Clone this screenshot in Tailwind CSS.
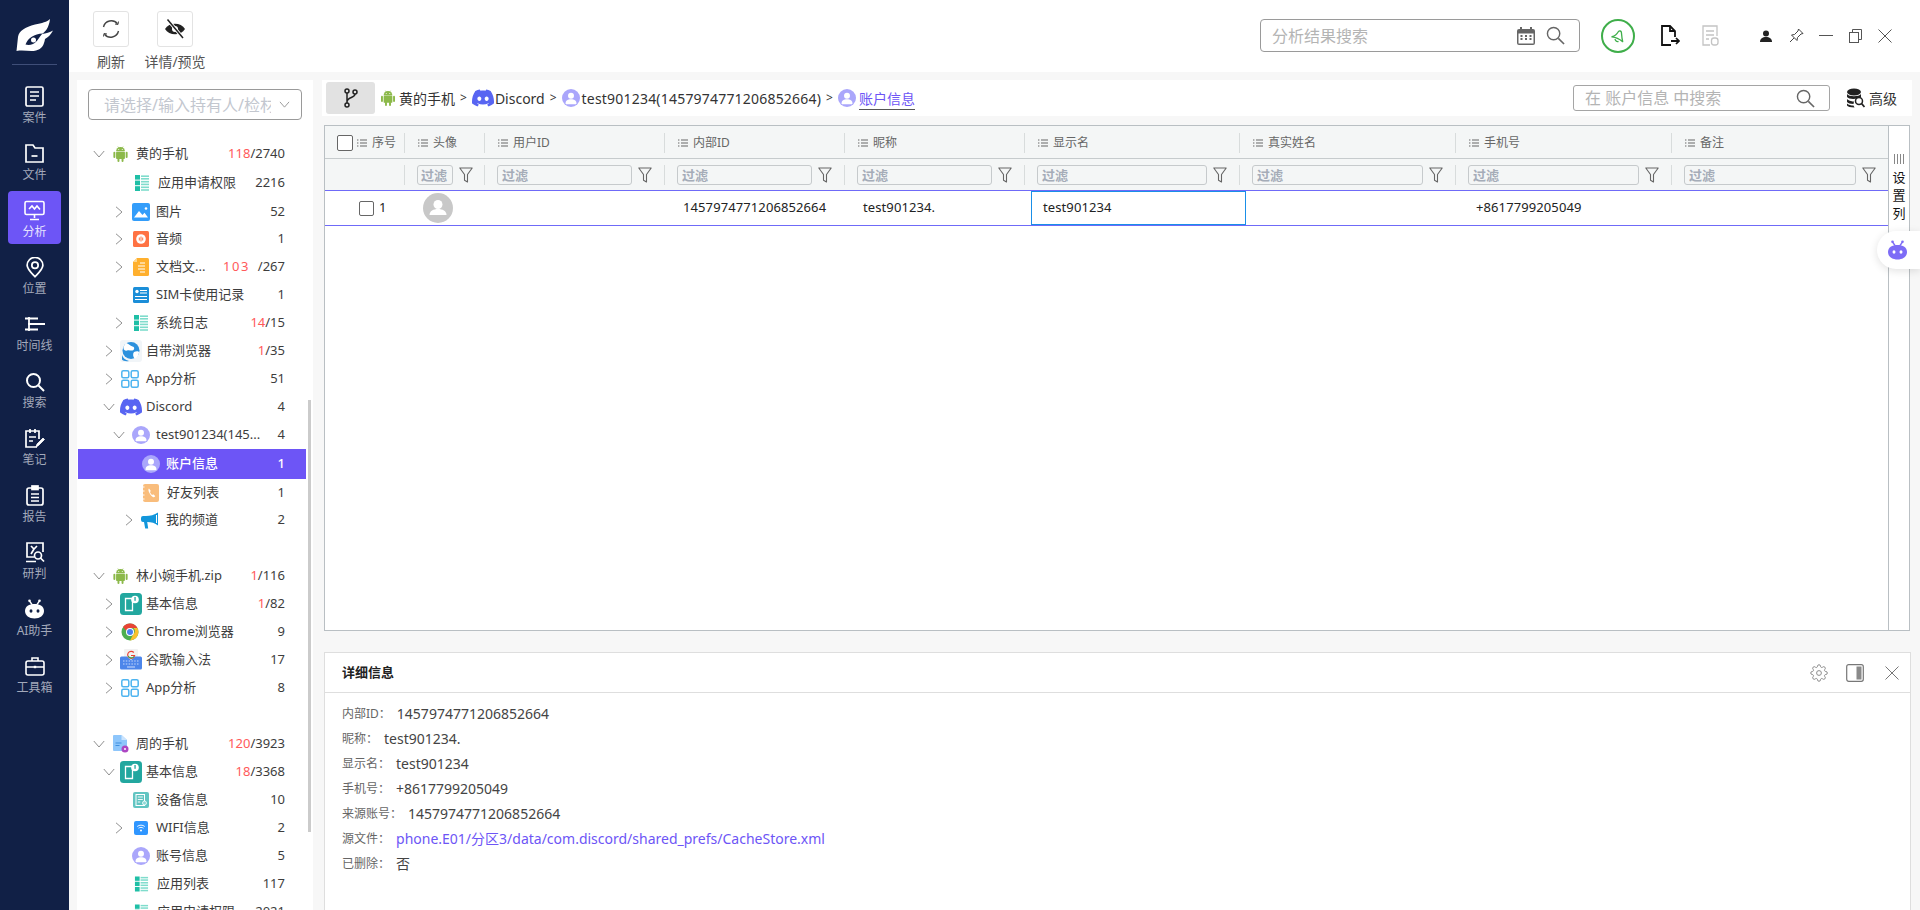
<!DOCTYPE html>
<html lang="zh-CN">
<head>
<meta charset="UTF-8" />
<title>分析</title>
<script src="https://cdn.jsdelivr.net/npm/@tailwindcss/browser@4"></script>
</head>
<body class="font-['Noto_Sans','Noto_Sans_CJK_SC',sans-serif] bg-white overflow-hidden">
<svg class="hidden">
  <symbol id="android" viewBox="0 0 16 18"><g fill="#8cb94a"><rect x="0" y="6.5" width="2.2" height="7" rx="1.1"/><rect x="13.8" y="6.5" width="2.2" height="7" rx="1.1"/><rect x="3" y="6.5" width="10" height="8" rx="1"/><rect x="4.6" y="13" width="2.2" height="5" rx="1.1"/><rect x="9.2" y="13" width="2.2" height="5" rx="1.1"/><path d="M3 6a5 5 0 0 1 10 0z"/></g><path d="M5 .6l1.2 2M11 .6 9.8 2.6" stroke="#8cb94a" stroke-width=".7"/><circle cx="6" cy="3.9" r=".6" fill="#fff"/><circle cx="10" cy="3.9" r=".6" fill="#fff"/></symbol>
  <symbol id="applist" viewBox="0 0 16 16"><g fill="#1fbfa6"><rect x="1" y="0" width="5" height="4.6"/><rect x="1" y="5.6" width="5" height="4.6"/><rect x="1" y="11.2" width="5" height="4.8"/></g><g fill="#7fdccc"><rect x="7" y="0.4" width="8" height="1.6"/><rect x="7" y="3" width="8" height="1.6"/><rect x="7" y="5.9" width="8" height="1.6"/><rect x="7" y="8.6" width="8" height="1.6"/><rect x="7" y="11.5" width="8" height="1.6"/><rect x="7" y="14.2" width="8" height="1.6"/></g></symbol>
  <symbol id="picture" viewBox="0 0 18 18"><rect width="18" height="18" rx="2" fill="#339dfa"/><path d="M2 14.5 7 8l3.5 4 2-2.2 3.5 4.700z" fill="#fff"/><circle cx="14" cy="5.500" r="1.300" fill="#fff"/></symbol>
  <symbol id="audio" viewBox="0 0 16 16"><rect width="16" height="16" rx="1.500" fill="#ff7243"/><circle cx="8" cy="8" r="4.800" fill="#fff"/><path d="M6.300 6.500v3M8 5.500v5M9.700 6.500v3" stroke="#ff7243" stroke-width="1"/></symbol>
  <symbol id="doc" viewBox="0 0 16 18"><path d="M4 0h10.500A1.500 1.500 0 0 1 16 1.500v15a1.500 1.500 0 0 1-1.500 1.500h-13A1.500 1.500 0 0 1 0 16.500V4z" fill="#ffb02e"/><path d="M0 4h4V0z" fill="#ffd88f"/><path d="M5 8h7M5 11h7M7 14h5M7 5h5" stroke="#fff" stroke-width="1.100"/></symbol>
  <symbol id="sim" viewBox="0 0 16 16"><rect width="16" height="16" rx="1.500" fill="#1b8ed8"/><circle cx="4" cy="4.500" r="1.700" fill="#fff"/><path d="M7 3.500h7M7 6h7M2 9.500h12M2 12.500h12" stroke="#fff" stroke-width="1.100"/></symbol>
  <symbol id="browser" viewBox="0 0 22 22"><rect width="22" height="22" rx="3" fill="#f1f5f8"/><circle cx="11" cy="10.500" r="8.500" fill="#2a90dd"/><path d="M6 3c3 .5 4 3 6.500 3.500s2 3.500 0 4-3-1-5.500 0S3 9 3.500 6.500zM14 12c2-1 4.500-1 5 0 0 3-2 6-4.500 6.500-1.500-2-2-4.500-.5-6.500z" fill="#fff"/><path d="M2 15c1 3 3 5 7 6-3 .5-6 0-7-1.500z" fill="#2a90dd"/></symbol>
  <symbol id="appgrid" viewBox="0 0 18 18"><g fill="none" stroke="#4db4f0" stroke-width="1.500"><rect x=".8" y=".8" width="7" height="7" rx="1.500"/><rect x="10.200" y=".8" width="7" height="7" rx="1.500"/><rect x=".8" y="10.200" width="7" height="7" rx="1.500"/><rect x="10.200" y="10.200" width="7" height="7" rx="1.500"/></g></symbol>
  <symbol id="discord" viewBox="0 0 24 24"><path fill="#5865f2" d="M20.317 4.3698a19.7913 19.7913 0 00-4.8851-1.5152.0741.0741 0 00-.0785.0371c-.211.3753-.4447.8648-.6083 1.2495-1.8447-.2762-3.68-.2762-5.4868 0-.1636-.3933-.4058-.8742-.6177-1.2495a.077.077 0 00-.0785-.037 19.7363 19.7363 0 00-4.8852 1.515.0699.0699 0 00-.0321.0277C.5334 9.0458-.319 13.5799.0992 18.0578a.0824.0824 0 00.0312.0561c2.0528 1.5076 4.0413 2.4228 5.9929 3.0294a.0777.0777 0 00.0842-.0276c.4616-.6304.8731-1.2952 1.226-1.9942a.076.076 0 00-.0416-.1057c-.6528-.2476-1.2743-.5495-1.8722-.8923a.077.077 0 01-.0076-.1277c.1258-.0943.2517-.1923.3718-.2914a.0743.0743 0 01.0776-.0105c3.9278 1.7933 8.18 1.7933 12.0614 0a.0739.0739 0 01.0785.0095c.1202.099.246.1981.3728.2924a.077.077 0 01-.0066.1276 12.2986 12.2986 0 01-1.873.8914.0766.0766 0 00-.0407.1067c.3604.698.7719 1.3628 1.225 1.9932a.076.076 0 00.0842.0286c1.961-.6067 3.9495-1.5219 6.0023-3.0294a.077.077 0 00.0313-.0552c.5004-5.177-.8382-9.6739-3.5485-13.6604a.061.061 0 00-.0312-.0286zM8.02 15.3312c-1.1825 0-2.1569-1.0857-2.1569-2.419 0-1.3332.9555-2.4189 2.157-2.4189 1.2108 0 2.1757 1.0952 2.1568 2.419 0 1.3332-.9555 2.4189-2.1569 2.4189zm7.9748 0c-1.1825 0-2.1569-1.0857-2.1569-2.419 0-1.3332.9554-2.4189 2.1569-2.4189 1.2108 0 2.1757 1.0952 2.1568 2.419 0 1.3332-.946 2.4189-2.1568 2.4189Z"/></symbol>
  <symbol id="person" viewBox="0 0 18 18"><circle cx="9" cy="9" r="9" fill="#aaa6fb"/><circle cx="9" cy="6.800" r="3" fill="#fff"/><path d="M3.500 14.500c0-3 2.500-4.200 5.500-4.200s5.500 1.200 5.500 4.200c0 .5-.5.8-1 .8h-9c-.5 0-1-.3-1-.8z" fill="#fff"/></symbol>
  <symbol id="phonebook" viewBox="0 0 16 18"><rect width="16" height="18" rx="2" fill="#f9bd7c"/><path d="M0 3h1.500M0 7h1.500M0 11h1.500M0 15h1.500" stroke="#fff" stroke-width="1"/><path d="M6 4.500c-.8.5-.8 2 .3 4.200s2.500 3.700 3.700 4.300 2-.2 2.200-1l-2-1.800-1 .8c-.8-.4-2-2.200-2.200-3.100l.8-.8z" fill="#fff"/></symbol>
  <symbol id="megaphone" viewBox="0 0 18 18"><path d="M17 1.500C13.500 4 9 5 5 5H2a2 2 0 0 0-2 2v2a2 2 0 0 0 2 2h1l1.200 6.500h3L6.200 11c4 0 8 1 10.800 3.500z" fill="#1296db"/><path d="M15.500 4v8" stroke="#fff" stroke-width="1"/></symbol>
  <symbol id="basicinfo" viewBox="0 0 22 22"><rect width="22" height="22" rx="3.500" fill="#22a79f"/><path d="M5.500 5.500h7v12h-7z" fill="none" stroke="#fff" stroke-width="1.300"/><circle cx="15" cy="6.500" r="3.800" fill="#fff"/><rect x="14.400" y="4" width="1.300" height="3.800" fill="#22a79f"/></symbol>
  <symbol id="chrome" viewBox="0 0 18 18"><circle cx="9" cy="9" r="8.500" fill="#4caf50"/><path d="M9 .5A8.500 8.500 0 0 1 16.400 5H9a4 4 0 0 0-3.800 2.700L2 4A8.500 8.500 0 0 1 9 .5z" fill="#e94335"/><path d="M16.400 5A8.500 8.500 0 0 1 9 17.500L12.500 11a4 4 0 0 0 0-6z" fill="#fbc02d"/><circle cx="9" cy="9" r="4" fill="#fff"/><circle cx="9" cy="9" r="3" fill="#4a80ee"/></symbol>
  <symbol id="gboard" viewBox="0 0 22 22"><rect x="4" y="0" width="14" height="12" rx="1" fill="#f2f2f2"/><path d="M0 9a1.500 1.500 0 0 1 1.500-1.500H7L11 11l4-3.500h5.500A1.500 1.500 0 0 1 22 9v10a1.500 1.500 0 0 1-1.500 1.500h-19A1.500 1.500 0 0 1 0 19z" fill="#4d86ea"/><path d="M3 12h16M3 15h16" stroke="#c5d8fa" stroke-width="1.100" stroke-dasharray="1.500 1.300"/><path d="M7 18h8" stroke="#c5d8fa" stroke-width="1.100"/><path d="M13.800 3.500a3.500 3.500 0 1 0 .8 3H11" fill="none" stroke="#e94335" stroke-width="1.200"/><path d="M8.100 7a3.500 3.500 0 0 0 6 .5" fill="none" stroke="#34a853" stroke-width="1.200"/></symbol>
  <symbol id="filebadge" viewBox="0 0 16 18"><path d="M0 1a1 1 0 0 1 1-1h7.500L14 5v10a1 1 0 0 1-1 1H1a1 1 0 0 1-1-1z" fill="#8ec6fb"/><path d="M8.500 0 14 5H8.500z" fill="#cbe4fd"/><path d="M2.500 8h6M2.500 10.500h4" stroke="#3f8fdf" stroke-width="1"/><circle cx="12" cy="14" r="3.500" fill="#ad46c2"/><circle cx="12" cy="14" r="1" fill="#fff"/></symbol>
  <symbol id="devinfo" viewBox="0 0 16 16"><rect width="16" height="16" rx="2" fill="#62c5c2"/><rect x="3" y="2.500" width="8.500" height="11" fill="none" stroke="#fff" stroke-width="1"/><path d="M4.800 5h5M4.800 7.500h5M4.800 10h2.500" stroke="#fff" stroke-width=".9"/><circle cx="11.500" cy="11" r="2" fill="#8fdad7" stroke="#fff" stroke-width=".8"/></symbol>
  <symbol id="wifi" viewBox="0 0 16 16"><rect x="1" y="1" width="14" height="14" rx="2" fill="#2f96ff"/><path d="M4.200 6.500c2.200-1.800 5.400-1.800 7.600 0M5.500 8.200c1.500-1.100 3.500-1.100 5 0" fill="none" stroke="#fff" stroke-width=".9"/><circle cx="8" cy="10.500" r="1" fill="#fff"/></symbol>
  <symbol id="chev-r" viewBox="0 0 8 12"><path d="M1 .8 7 6l-6 5.200" fill="none" stroke="#8f8f8f" stroke-width="1"/></symbol>
  <symbol id="chev-d" viewBox="0 0 12 8"><path d="M.8 1 6 7l5.200-6" fill="none" stroke="#8f8f8f" stroke-width="1"/></symbol>
  <symbol id="lines" viewBox="0 0 10 8"><path d="M0 1h1.400M0 4h1.400M0 7h1.400M3 1h7M3 4h7M3 7h7" stroke="#666" stroke-width="1.100"/></symbol>
  <symbol id="funnel" viewBox="0 0 14 16"><path d="M.8 1h12.400L8.500 7.500V15l-3-1.800V7.500z" fill="none" stroke="#666" stroke-width="1.100" stroke-linejoin="round"/></symbol>
  <symbol id="search" viewBox="0 0 20 20"><circle cx="8" cy="8" r="6.500" fill="none" stroke="#666" stroke-width="1.500"/><path d="m13 13 6 6" stroke="#666" stroke-width="1.700"/></symbol>
</svg>

<div class="flex h-[910px] w-[1920px]">
  <!-- left nav -->
  <nav class="w-[69px] shrink-0 bg-[#112046] flex flex-col items-center text-[12px] text-[#a3a9ba]">
    <svg class="w-[37px] h-[34px] mt-[18px]" viewBox="0 0 37 34"><path fill="#fff" d="M34 1C31 4 26 5 19 6.500 9 9 3 13 2 19L.5 33C8 31.500 14 34 20 32.500 26 31 28 27 29 21c3-1.500 6-4.500 8-8.500-3 2-7 3-11 3.500 3-2 7-6 8-15z"/><path fill="#112046" d="M9.500 26.500C12 20 18 16 27 15.500 23 18 22 24 17 26c-2.500 1-5 1.300-7.500.5z"/><circle cx="17.500" cy="22" r="2.500" fill="#fff"/></svg>
    <div class="w-[45px] h-px bg-[#3f4e78] mt-3 mb-3"></div>

    <a class="w-[53px] h-[53px] mb-1 pt-[9px] flex flex-col items-center">
      <svg class="w-[21px] h-[21px]" viewBox="0 0 21 21" fill="none" stroke="#fff" stroke-width="1.700"><rect x="2" y="1" width="17" height="19" rx="1.500"/><path d="M6 6h9M6 10h9M6 14h6"/></svg>
      <span class="mt-[3px] leading-[16px]">案件</span>
    </a>
    <a class="w-[53px] h-[53px] mb-1 pt-[9px] flex flex-col items-center">
      <svg class="w-[21px] h-[21px]" viewBox="0 0 21 21" fill="none" stroke="#fff" stroke-width="1.700"><path d="M2 2h7l2 3h8v14H2z"/><path d="M7.500 13h6"/></svg>
      <span class="mt-[3px] leading-[16px]">文件</span>
    </a>
    <a class="w-[53px] h-[53px] mb-1 pt-[9px] flex flex-col items-center bg-[#6d55f6] rounded-[4px] text-[#e6e2ff]">
      <svg class="w-[21px] h-[21px]" viewBox="0 0 21 21" fill="none" stroke="#fff" stroke-width="1.600"><rect x="1" y="1.500" width="19" height="13" rx="1.500"/><path d="M5 9l3-3 2.500 3L13 6l3 3.500M10.500 15v3M6 19.500h9"/></svg>
      <span class="mt-[3px] leading-[16px]">分析</span>
    </a>
    <a class="w-[53px] h-[53px] mb-1 pt-[9px] flex flex-col items-center">
      <svg class="w-[20px] h-[21px]" viewBox="0 0 21 24" fill="none" stroke="#fff" stroke-width="2"><path d="M10.500 22.500C6 18 1.500 14 1.500 9.500a9 9 0 0 1 18 0c0 4.500-4.500 8.500-9 13z"/><circle cx="10.500" cy="9.500" r="3.600"/></svg>
      <span class="mt-[3px] leading-[16px]">位置</span>
    </a>
    <a class="w-[53px] h-[53px] mb-1 pt-[9px] flex flex-col items-center">
      <svg class="w-[21px] h-[16px] mt-[2px]" viewBox="0 0 21 16" fill="none" stroke="#fff" stroke-width="1.800"><path d="M5 1v14"/><path d="M1 2.500h13M4 8h17M1 13.500h13"/></svg>
      <span class="mt-[6px] leading-[16px]">时间线</span>
    </a>
    <a class="w-[53px] h-[53px] mb-1 pt-[9px] flex flex-col items-center">
      <svg class="w-[20px] h-[20px] mt-[1px]" viewBox="0 0 20 20" fill="none" stroke="#fff" stroke-width="2"><circle cx="8.500" cy="8.500" r="6.500"/><path d="m13.500 13.500 5.500 5.500"/></svg>
      <span class="mt-[3px] leading-[16px]">搜索</span>
    </a>
    <a class="w-[53px] h-[53px] mb-1 pt-[9px] flex flex-col items-center">
      <svg class="w-[21px] h-[21px]" viewBox="0 0 21 21" fill="none" stroke="#fff" stroke-width="1.700"><path d="M13 19H2V3h13v8M6 1v4M11 1v4M5 9h7M5 13h4"/><path d="m12 19 1-3 6-6 1.500 1.500-6 6z" fill="#fff" stroke-width=".8"/></svg>
      <span class="mt-[3px] leading-[16px]">笔记</span>
    </a>
    <a class="w-[53px] h-[53px] mb-1 pt-[9px] flex flex-col items-center">
      <svg class="w-[18px] h-[21px]" viewBox="0 0 18 21" fill="none" stroke="#fff" stroke-width="1.700"><rect x="1" y="3" width="16" height="17" rx="2"/><rect x="6" y="1" width="6" height="3.500" fill="#fff"/><path d="M5 9h8M5 12.500h8M5 16h8"/></svg>
      <span class="mt-[3px] leading-[16px]">报告</span>
    </a>
    <a class="w-[53px] h-[53px] mb-1 pt-[9px] flex flex-col items-center">
      <svg class="w-[20px] h-[21px]" viewBox="0 0 20 21" fill="none" stroke="#fff" stroke-width="1.700"><path d="M9 15H2V1h16v9M1 19.500h10M6 4l3 3 3-3M9 7l-3 5"/><circle cx="13" cy="13.500" r="3.500"/><path d="m15.500 16 3.500 3.500"/></svg>
      <span class="mt-[3px] leading-[16px]">研判</span>
    </a>
    <a class="w-[53px] h-[53px] mb-1 pt-[9px] flex flex-col items-center">
      <svg class="w-[21px] h-[20px]" viewBox="0 0 21 20"><path fill="#fff" d="M10.500 5C16 5 20 7.500 20 12s-4 7.500-9.500 7.500S1 16.500 1 12s4-7 9.500-7z"/><path d="M8 5.500 5.500 2M13 5.500 15.500 2" stroke="#fff" stroke-width="1.300"/><circle cx="5.500" cy="1.800" r="1.300" fill="#fff"/><circle cx="15.500" cy="1.800" r="1.300" fill="#fff"/><ellipse cx="7" cy="12" rx="1.500" ry="1.800" fill="#112046"/><ellipse cx="14" cy="12" rx="1.500" ry="1.800" fill="#112046"/></svg>
      <span class="mt-[4px] leading-[16px]">AI助手</span>
    </a>
    <a class="w-[53px] h-[53px] mb-1 pt-[9px] flex flex-col items-center">
      <svg class="w-[20px] h-[20px]" viewBox="0 0 20 20" fill="none" stroke="#fff" stroke-width="1.600"><rect x="1" y="5" width="18" height="14" rx="2"/><path d="M7 5V2h6v3M1 11h18"/><rect x="8.800" y="9.800" width="2.400" height="2.400" fill="#fff" stroke="none"/></svg>
      <span class="mt-[4px] leading-[16px]">工具箱</span>
    </a>
  </nav>

  <div class="flex-1 min-w-0 flex flex-col">
    <!-- top bar -->
    <header class="h-[72px] shrink-0 bg-white flex pl-[24px] pr-[28px]">
      <div class="flex flex-col items-center w-[36px] pt-[11px]">
        <div class="w-[36px] h-[36px] border border-[#e3e3e3] rounded-[3px] flex items-center justify-center">
          <svg class="w-[20px] h-[20px]" viewBox="0 0 20 20" fill="none" stroke="#444" stroke-width="1.400"><path d="M2.500 8a8 8 0 0 1 14-3.200M17.500 12a8 8 0 0 1-14 3.200"/><path d="m17.500 2.500-.5 3-3-.5M2.500 17.500l.5-3 3 .5" stroke-width="1"/></svg>
        </div>
        <span class="mt-[6px] text-[14px] leading-[18px] text-[#555] whitespace-nowrap">刷新</span>
      </div>
      <div class="flex flex-col items-center ml-[15px] w-[62px] pt-[11px]">
        <div class="w-[36px] h-[36px] border border-[#e3e3e3] rounded-[3px] flex items-center justify-center">
          <svg class="w-[22px] h-[22px]" viewBox="0 0 22 22"><path d="M1 11c4-7 16-7 20 0-4 7-16 7-20 0z" fill="#222"/><circle cx="11" cy="11" r="3" fill="#fff"/><path d="M3.500 1.500 19 20" stroke="#fff" stroke-width="3.500"/><path d="M3.500 1.500 19 20" stroke="#222" stroke-width="1.500"/></svg>
        </div>
        <span class="mt-[6px] text-[14px] leading-[18px] text-[#555] whitespace-nowrap">详情/预览</span>
      </div>

      <div class="ml-auto flex items-center h-[71px]">
        <div class="w-[320px] h-[33px] border border-[#9a9a9a] rounded-[4px] flex items-center pl-[11px] pr-[14px]">
          <input class="flex-1 min-w-0 text-[16px] outline-none placeholder:text-[#b4b4b4]" placeholder="分析结果搜索" />
          <svg class="w-[20px] h-[20px] mr-[10px]" viewBox="0 0 20 20"><rect x="1" y="3" width="18" height="16" rx="2" fill="#666"/><rect x="2.500" y="7.500" width="15" height="10" fill="#fff"/><path d="M5 1v4M15 1v4" stroke="#666" stroke-width="2"/><path d="M4.500 10h2M9 10h2M13.500 10h2M4.500 13h2M9 13h2M13.500 13h2" stroke="#666" stroke-width="1.800"/></svg>
          <svg class="w-[19px] h-[19px]"><use href="#search"/></svg>
        </div>
        <div class="w-[34px] h-[34px] ml-[21px] rounded-full border-[2.500px] border-[#3fae4a] flex items-center justify-center">
          <svg class="w-[16px] h-[18px]" viewBox="0 0 16 18" fill="none" stroke="#3fae4a" stroke-width="1.300" stroke-linejoin="round"><path d="M2 9.700C5 9 7 7 8.500 4.500c1-1 2.500-.5 2.800.5.500 2 .2 5 1.400 9.700-3-2.500-7-4.500-10.700-4.800z"/><path d="M5 12c.3 2 2 3 3.500 2.300"/></svg>
        </div>
        <svg class="w-[20px] h-[21px] ml-[25px]" viewBox="0 0 20 21" fill="none" stroke="#111" stroke-width="1.800"><path d="M11 20H2V1h8l5 5v6"/><path d="M10 1v5h5"/><path d="M11 16h8" stroke-width="2"/><path d="m16 13 3 3-3 3" stroke-width="1.700"/></svg>
        <svg class="w-[17px] h-[21px] ml-[22px]" viewBox="0 0 17 21" fill="none" stroke="#c4c4c4" stroke-width="1.300"><path d="M8 20H1V1h14v10M4 6h8M4 10h8M4 14h3"/><rect x="9.500" y="13" width="6.500" height="7" rx="2.500"/></svg>
        <svg class="w-[12px] h-[12px] ml-[41px]" viewBox="0 0 12 12" fill="#222"><circle cx="6" cy="3.500" r="3"/><path d="M0 12c0-3.500 2.500-5 6-5s6 1.500 6 5z"/></svg>
        <svg class="w-[15px] h-[15px] ml-[17px]" viewBox="0 0 15 15" fill="none" stroke="#444" stroke-width="1"><path d="M9.500 1 14 5.500l-2 .5-3.500 3.500-.5 3L2.500 7l3-.5L9 3zM5 10l-4 4"/></svg>
        <div class="w-[14px] h-px bg-[#555] ml-[15px]"></div>
        <svg class="w-[13px] h-[14px] ml-[16px]" viewBox="0 0 13 14" fill="none" stroke="#555" stroke-width="1"><rect x=".5" y="3.500" width="9" height="10"/><path d="M3.500 3.500v-3h9v10h-3"/></svg>
        <svg class="w-[14px] h-[14px] ml-[16px]" viewBox="0 0 14 14" stroke="#555" stroke-width="1"><path d="m.5.5 13 13M13.500.5l-13 13"/></svg>
      </div>
    </header>

    <div class="flex-1 min-h-0 bg-[#f7f7f7] flex pt-[8px]">
      <!-- evidence tree -->
      <aside class="ml-[8px] w-[236px] shrink-0 bg-white relative overflow-hidden text-[13px] text-[#3d3d3d]">
        <div class="mx-[11px] mt-[9px] h-[31px] border border-[#9a9a9a] rounded-[4px] flex items-center pl-[15px] pr-[11px] overflow-hidden">
          <span class="text-[16px] text-[#c3c7cf] w-[167px] overflow-hidden whitespace-nowrap">请选择/输入持有人/检材</span>
          <svg class="w-[11px] h-[7px] ml-auto"><use href="#chev-d"/></svg>
        </div>
        <div class="h-[20px]"></div>
        <div class="pl-px pr-[28px]">
          <div class="flex items-center h-[28px] pl-[15px]"><svg class="w-[12px] h-[8px] mr-[8px]"><use href="#chev-d"/></svg><svg class="w-[15px] h-[16px] mr-[8px]"><use href="#android"/></svg><span>黄的手机</span><span class="ml-auto"><span class="text-[#ff5a5a]">118</span>/2740</span></div>
          <div class="flex items-center h-[30px] pl-[56px]"><svg class="w-[16px] h-[16px] mr-[8px]"><use href="#applist"/></svg><span>应用申请权限</span><span class="ml-auto">2216</span></div>
          <div class="flex items-center h-[27px] pl-[37px]"><svg class="w-[8px] h-[12px] mr-[10px]"><use href="#chev-r"/></svg><svg class="w-[18px] h-[18px] mr-[6px] -ml-[1px]"><use href="#picture"/></svg><span>图片</span><span class="ml-auto">52</span></div>
          <div class="flex items-center h-[28px] pl-[37px]"><svg class="w-[8px] h-[12px] mr-[10px]"><use href="#chev-r"/></svg><svg class="w-[16px] h-[16px] mr-[7px]"><use href="#audio"/></svg><span>音频</span><span class="ml-auto">1</span></div>
          <div class="flex items-center h-[28px] pl-[37px]"><svg class="w-[8px] h-[12px] mr-[10px]"><use href="#chev-r"/></svg><svg class="w-[16px] h-[18px] mr-[7px]"><use href="#doc"/></svg><span>文档文...</span><span class="ml-auto"><span class="text-[#ff5a5a] tracking-[1.500px]">103</span><span class="ml-[8px]">/267</span></span></div>
          <div class="flex items-center h-[28px] pl-[55px]"><svg class="w-[16px] h-[16px] mr-[7px]"><use href="#sim"/></svg><span>SIM卡使用记录</span><span class="ml-auto">1</span></div>
          <div class="flex items-center h-[28px] pl-[37px]"><svg class="w-[8px] h-[12px] mr-[10px]"><use href="#chev-r"/></svg><svg class="w-[16px] h-[16px] mr-[7px]"><use href="#applist"/></svg><span>系统日志</span><span class="ml-auto"><span class="text-[#ff5a5a]">14</span>/15</span></div>
          <div class="flex items-center h-[28px] pl-[27px]"><svg class="w-[8px] h-[12px] mr-[7px]"><use href="#chev-r"/></svg><svg class="w-[22px] h-[22px] mr-[4px]"><use href="#browser"/></svg><span>自带浏览器</span><span class="ml-auto"><span class="text-[#ff5a5a]">1</span>/35</span></div>
          <div class="flex items-center h-[28px] pl-[27px]"><svg class="w-[8px] h-[12px] mr-[8px]"><use href="#chev-r"/></svg><svg class="w-[18px] h-[18px] mr-[7px]"><use href="#appgrid"/></svg><span>App分析</span><span class="ml-auto">51</span></div>
          <div class="flex items-center h-[28px] pl-[25px]"><svg class="w-[12px] h-[8px] mr-[5px]"><use href="#chev-d"/></svg><svg class="w-[22px] h-[22px] mr-[4px]"><use href="#discord"/></svg><span>Discord</span><span class="ml-auto">4</span></div>
          <div class="flex items-center h-[28px] pl-[35px]"><svg class="w-[12px] h-[8px] mr-[7px]"><use href="#chev-d"/></svg><svg class="w-[18px] h-[18px] mr-[6px]"><use href="#person"/></svg><span>test901234(145...</span><span class="ml-auto">4</span></div>
        </div>
        <div class="flex items-center h-[30px] ml-[1px] w-[228px] bg-[#6d55f6] text-white pl-[64px] pr-[21px]"><svg class="w-[18px] h-[18px] mr-[6px]"><use href="#person"/></svg><span class="font-medium">账户信息</span><span class="ml-auto font-medium">1</span></div>
        <div class="pl-px pr-[28px]">
          <div class="flex items-center h-[27px] pl-[65px]"><svg class="w-[16px] h-[18px] mr-[8px]"><use href="#phonebook"/></svg><span>好友列表</span><span class="ml-auto">1</span></div>
          <div class="flex items-center h-[28px] pl-[47px]"><svg class="w-[8px] h-[12px] mr-[8px]"><use href="#chev-r"/></svg><svg class="w-[18px] h-[18px] mr-[7px]"><use href="#megaphone"/></svg><span>我的频道</span><span class="ml-auto">2</span></div>
          <div class="h-[28px]"></div>
          <div class="flex items-center h-[28px] pl-[15px]"><svg class="w-[12px] h-[8px] mr-[8px]"><use href="#chev-d"/></svg><svg class="w-[15px] h-[16px] mr-[8px]"><use href="#android"/></svg><span>林小婉手机.zip</span><span class="ml-auto"><span class="text-[#ff5a5a]">1</span>/116</span></div>
          <div class="flex items-center h-[28px] pl-[27px]"><svg class="w-[8px] h-[12px] mr-[7px]"><use href="#chev-r"/></svg><svg class="w-[22px] h-[22px] mr-[4px]"><use href="#basicinfo"/></svg><span>基本信息</span><span class="ml-auto"><span class="text-[#ff5a5a]">1</span>/82</span></div>
          <div class="flex items-center h-[28px] pl-[27px]"><svg class="w-[8px] h-[12px] mr-[8px]"><use href="#chev-r"/></svg><svg class="w-[18px] h-[18px] mr-[7px]"><use href="#chrome"/></svg><span>Chrome浏览器</span><span class="ml-auto">9</span></div>
          <div class="flex items-center h-[28px] pl-[27px]"><svg class="w-[8px] h-[12px] mr-[7px]"><use href="#chev-r"/></svg><svg class="w-[22px] h-[22px] mr-[4px]"><use href="#gboard"/></svg><span>谷歌输入法</span><span class="ml-auto">17</span></div>
          <div class="flex items-center h-[28px] pl-[27px]"><svg class="w-[8px] h-[12px] mr-[8px]"><use href="#chev-r"/></svg><svg class="w-[18px] h-[18px] mr-[7px]"><use href="#appgrid"/></svg><span>App分析</span><span class="ml-auto">8</span></div>
          <div class="h-[28px]"></div>
          <div class="flex items-center h-[28px] pl-[15px]"><svg class="w-[12px] h-[8px] mr-[8px]"><use href="#chev-d"/></svg><svg class="w-[16px] h-[18px] mr-[7px]"><use href="#filebadge"/></svg><span>周的手机</span><span class="ml-auto"><span class="text-[#ff5a5a]">120</span>/3923</span></div>
          <div class="flex items-center h-[28px] pl-[25px]"><svg class="w-[12px] h-[8px] mr-[5px]"><use href="#chev-d"/></svg><svg class="w-[22px] h-[22px] mr-[4px]"><use href="#basicinfo"/></svg><span>基本信息</span><span class="ml-auto"><span class="text-[#ff5a5a]">18</span>/3368</span></div>
          <div class="flex items-center h-[28px] pl-[55px]"><svg class="w-[16px] h-[16px] mr-[7px]"><use href="#devinfo"/></svg><span>设备信息</span><span class="ml-auto">10</span></div>
          <div class="flex items-center h-[28px] pl-[37px]"><svg class="w-[8px] h-[12px] mr-[10px]"><use href="#chev-r"/></svg><svg class="w-[16px] h-[16px] mr-[7px]"><use href="#wifi"/></svg><span>WIFI信息</span><span class="ml-auto">2</span></div>
          <div class="flex items-center h-[28px] pl-[54px]"><svg class="w-[18px] h-[18px] mr-[6px]"><use href="#person"/></svg><span>账号信息</span><span class="ml-auto">5</span></div>
          <div class="flex items-center h-[28px] pl-[56px]"><svg class="w-[15px] h-[16px] mr-[8px]"><use href="#applist"/></svg><span>应用列表</span><span class="ml-auto">117</span></div>
          <div class="flex items-center h-[28px] pl-[56px]"><svg class="w-[15px] h-[16px] mr-[8px]"><use href="#applist"/></svg><span>应用申请权限</span><span class="ml-auto">2021</span></div>
        </div>
        <div class="absolute left-[231px] top-[320px] w-[3px] h-[432px] bg-[#cbcbcb]"></div>
      </aside>

      <!-- main -->
      <main class="ml-[9px] w-[1590px] shrink-0 flex flex-col">
        <div class="h-[36px] shrink-0 bg-white flex items-center pl-[4px] pr-[14px] text-[14px] text-[#333]">
          <div class="w-[49px] h-[32px] bg-[#e2e2e2] rounded-[3px] flex items-center justify-center">
            <svg class="w-[14px] h-[20px]" viewBox="0 0 14 20" fill="none" stroke="#222" stroke-width="1.500"><circle cx="3" cy="3" r="2"/><circle cx="11" cy="4" r="2"/><circle cx="3" cy="17" r="2"/><path d="M3 5v10M11 6c0 4-8 3-8 8"/></svg>
          </div>
          <svg class="w-[14px] h-[16px] ml-[6px] mr-[4px]"><use href="#android"/></svg><span>黄的手机</span>
          <span class="mx-[5px] text-[12px]">&gt;</span>
          <svg class="w-[22px] h-[22px] mr-[1px]"><use href="#discord"/></svg><span>Discord</span>
          <span class="mx-[5px] text-[12px]">&gt;</span>
          <svg class="w-[18px] h-[18px] mr-[2px]"><use href="#person"/></svg><span class="tracking-[0.2px]">test901234(1457974771206852664)</span>
          <span class="mx-[5px] text-[12px]">&gt;</span>
          <svg class="w-[18px] h-[18px] mr-[3px]"><use href="#person"/></svg><span class="text-[#6d55f6] border-b border-[#555] leading-[20px] mt-[2px]">账户信息</span>

          <div class="ml-auto w-[257px] h-[26px] border border-[#a5a5a5] rounded-[3px] flex items-center pl-[11px] pr-[14px]">
            <input class="flex-1 min-w-0 text-[16px] outline-none placeholder:text-[#b4b4b4]" placeholder="在 账户信息 中搜索" />
            <svg class="w-[19px] h-[19px]"><use href="#search"/></svg>
          </div>
          <svg class="w-[19px] h-[20px] ml-[16px] mr-[4px]" viewBox="0 0 19 20"><ellipse cx="8" cy="4" rx="7" ry="3.500" fill="#222"/><path d="M1 6c2 3 12 3 14 0v3c-2 2-12 3-14 0zM1 11c2 2 6 2.500 7 2.500l-.5 2.500C4 16 2 15 1 14zM1 15.500c1.500 1.500 4 2 6.500 2l1 2c-4 0-7-1-7.500-2z" fill="#222"/><circle cx="13" cy="13" r="3.500" fill="#fff" stroke="#222" stroke-width="1.500"/><path d="m15.500 15.500 3 3.500" stroke="#222" stroke-width="1.800"/></svg>
          <span class="text-[#333] mr-[1px]">高级</span>
        </div>

        <!-- table -->
        <section class="mt-[9px] ml-[2px] w-[1586px] h-[506px] shrink-0 border border-[#b9bfc3] bg-white flex relative">
          <div class="flex-1 min-w-0">
            <div class="h-[33px] pt-[1px] bg-[#f4f6f6] border-b border-[#c6cbcd] grid grid-cols-[80px_80px_180px_180px_180px_215px_216px_216px_217px] text-[12px] text-[#666]">
              <div class="flex items-center pl-[12px]"><span class="w-[16px] h-[16px] border border-[#666] rounded-[2px] bg-white"></span><svg class="w-[10px] h-[8px] ml-[4px] mr-[5px]"><use href="#lines"/></svg>序号<span class="ml-auto w-px h-[20px] bg-[#d8dcdc]"></span></div>
              <div class="flex items-center pl-[13px]"><svg class="w-[10px] h-[8px] mr-[5px]"><use href="#lines"/></svg>头像<span class="ml-auto w-px h-[20px] bg-[#d8dcdc]"></span></div>
              <div class="flex items-center pl-[13px]"><svg class="w-[10px] h-[8px] mr-[5px]"><use href="#lines"/></svg>用户ID<span class="ml-auto w-px h-[20px] bg-[#d8dcdc]"></span></div>
              <div class="flex items-center pl-[13px]"><svg class="w-[10px] h-[8px] mr-[5px]"><use href="#lines"/></svg>内部ID<span class="ml-auto w-px h-[20px] bg-[#d8dcdc]"></span></div>
              <div class="flex items-center pl-[13px]"><svg class="w-[10px] h-[8px] mr-[5px]"><use href="#lines"/></svg>昵称<span class="ml-auto w-px h-[20px] bg-[#d8dcdc]"></span></div>
              <div class="flex items-center pl-[13px]"><svg class="w-[10px] h-[8px] mr-[5px]"><use href="#lines"/></svg>显示名<span class="ml-auto w-px h-[20px] bg-[#d8dcdc]"></span></div>
              <div class="flex items-center pl-[13px]"><svg class="w-[10px] h-[8px] mr-[5px]"><use href="#lines"/></svg>真实姓名<span class="ml-auto w-px h-[20px] bg-[#d8dcdc]"></span></div>
              <div class="flex items-center pl-[13px]"><svg class="w-[10px] h-[8px] mr-[5px]"><use href="#lines"/></svg>手机号<span class="ml-auto w-px h-[20px] bg-[#d8dcdc]"></span></div>
              <div class="flex items-center pl-[13px]"><svg class="w-[10px] h-[8px] mr-[5px]"><use href="#lines"/></svg>备注<span class="ml-auto w-px h-[20px] bg-[#d8dcdc]"></span></div>
            </div>
            <div class="h-[31px] bg-[#f4f6f6] grid grid-cols-[80px_80px_180px_180px_180px_215px_216px_216px_217px]">
              <div class="flex items-center"><span class="ml-auto w-px h-[20px] bg-[#d8dcdc]"></span></div>
              <div class="flex items-center pl-[12px]"><input class="w-[36px] min-w-0 h-[20px] border border-[#c6cacc] rounded-[3px] bg-transparent px-[3px] text-[13px] font-bold placeholder:text-[#a5acb8]" placeholder="过滤" /><svg class="w-[14px] h-[16px] ml-[6px]"><use href="#funnel"/></svg><span class="ml-auto w-px h-[20px] bg-[#d8dcdc]"></span></div>
              <div class="flex items-center pl-[12px]"><input class="flex-1 min-w-0 h-[20px] border border-[#c6cacc] rounded-[3px] bg-transparent px-[4px] text-[13px] font-bold placeholder:text-[#a5acb8]" placeholder="过滤" /><svg class="w-[14px] h-[16px] ml-[6px] mr-[12px]"><use href="#funnel"/></svg><span class="w-px h-[20px] bg-[#d8dcdc]"></span></div>
              <div class="flex items-center pl-[12px]"><input class="flex-1 min-w-0 h-[20px] border border-[#c6cacc] rounded-[3px] bg-transparent px-[4px] text-[13px] font-bold placeholder:text-[#a5acb8]" placeholder="过滤" /><svg class="w-[14px] h-[16px] ml-[6px] mr-[12px]"><use href="#funnel"/></svg><span class="w-px h-[20px] bg-[#d8dcdc]"></span></div>
              <div class="flex items-center pl-[12px]"><input class="flex-1 min-w-0 h-[20px] border border-[#c6cacc] rounded-[3px] bg-transparent px-[4px] text-[13px] font-bold placeholder:text-[#a5acb8]" placeholder="过滤" /><svg class="w-[14px] h-[16px] ml-[6px] mr-[12px]"><use href="#funnel"/></svg><span class="w-px h-[20px] bg-[#d8dcdc]"></span></div>
              <div class="flex items-center pl-[12px]"><input class="flex-1 min-w-0 h-[20px] border border-[#c6cacc] rounded-[3px] bg-transparent px-[4px] text-[13px] font-bold placeholder:text-[#a5acb8]" placeholder="过滤" /><svg class="w-[14px] h-[16px] ml-[6px] mr-[12px]"><use href="#funnel"/></svg><span class="w-px h-[20px] bg-[#d8dcdc]"></span></div>
              <div class="flex items-center pl-[12px]"><input class="flex-1 min-w-0 h-[20px] border border-[#c6cacc] rounded-[3px] bg-transparent px-[4px] text-[13px] font-bold placeholder:text-[#a5acb8]" placeholder="过滤" /><svg class="w-[14px] h-[16px] ml-[6px] mr-[12px]"><use href="#funnel"/></svg><span class="w-px h-[20px] bg-[#d8dcdc]"></span></div>
              <div class="flex items-center pl-[12px]"><input class="flex-1 min-w-0 h-[20px] border border-[#c6cacc] rounded-[3px] bg-transparent px-[4px] text-[13px] font-bold placeholder:text-[#a5acb8]" placeholder="过滤" /><svg class="w-[14px] h-[16px] ml-[6px] mr-[12px]"><use href="#funnel"/></svg><span class="w-px h-[20px] bg-[#d8dcdc]"></span></div>
              <div class="flex items-center pl-[12px]"><input class="flex-1 min-w-0 h-[20px] border border-[#c6cacc] rounded-[3px] bg-transparent px-[4px] text-[13px] font-bold placeholder:text-[#a5acb8]" placeholder="过滤" /><svg class="w-[14px] h-[16px] ml-[6px] mr-[12px]"><use href="#funnel"/></svg><span class="w-px h-[20px] bg-[#d8dcdc]"></span></div>
            </div>
            <div class="h-[36px] border-y border-[#6f6af8] grid grid-cols-[86px_80px_180px_180px_180px_215px_216px_216px_211px] text-[13px] tracking-[0.1px] text-[#222] bg-white">
              <div class="flex items-center pl-[34px]"><span class="w-[15px] h-[15px] border border-[#666] rounded-[2px]"></span><span class="ml-[5px]">1</span></div>
              <div class="flex items-center pl-[12px]"><svg class="w-[30px] h-[30px]" viewBox="0 0 30 30"><circle cx="15" cy="15" r="15" fill="#c8c8c8"/><circle cx="15" cy="11.500" r="4.500" fill="#fff"/><path d="M6.500 22c0-4 4-6 8.500-6s8.500 2 8.500 6z" fill="#fff"/></svg></div>
              <div></div>
              <div class="flex items-center pl-[12px]">1457974771206852664</div>
              <div class="flex items-center pl-[12px]">test901234.</div>
              <div class="flex items-center pl-[11px] border border-[#1a8fe8]">test901234</div>
              <div></div>
              <div class="flex items-center pl-[14px]">+8617799205049</div>
              <div></div>
            </div>
          </div>
          <div class="w-[21px] shrink-0 border-l border-[#b9bfc3] flex flex-col items-center pt-[28px] text-[13px] leading-[18px] text-[#111]">
            <div class="w-[10px] h-[10px] flex justify-between mb-[4px]"><span class="w-px h-full bg-[#888]"></span><span class="w-px h-full bg-[#888]"></span><span class="w-px h-full bg-[#888]"></span><span class="w-px h-full bg-[#888]"></span></div>
            <span>设</span><span>置</span><span>列</span>
          </div>
          <div class="absolute right-[-11px] top-[105px] w-[43px] h-[38px] bg-white rounded-l-[19px] shadow-[0_2px_8px_rgba(0,0,0,0.12)] flex items-center pl-[10px]">
            <svg class="w-[21px] h-[20px]" viewBox="0 0 21 20"><path fill="#7d6cf6" d="M10.500 5C16 5 20 7.500 20 12s-4 7.500-9.500 7.500S1 16.500 1 12s4-7 9.500-7z"/><path d="M8 5.500 5.500 2M13 5.500 15.500 2" stroke="#7d6cf6" stroke-width="1.300"/><circle cx="5.500" cy="1.800" r="1.300" fill="#7d6cf6"/><circle cx="15.500" cy="1.800" r="1.300" fill="#7d6cf6"/><ellipse cx="7" cy="12" rx="1.500" ry="1.800" fill="#fff"/><ellipse cx="14" cy="12" rx="1.500" ry="1.800" fill="#fff"/></svg>
          </div>
        </section>

        <!-- detail panel -->
        <section class="mt-[21px] ml-[2px] w-[1587px] flex-1 border border-[#dedede] border-b-0 bg-white">
          <div class="h-[40px] border-b border-[#dedede] flex items-center pl-[17px] pr-[11px]">
            <span class="text-[13px] font-bold text-[#222]">详细信息</span>
            <svg class="w-[18px] h-[18px] ml-auto" viewBox="0 0 24 24" fill="none" stroke="#8a8a8a" stroke-width="1.300"><circle cx="12" cy="12" r="3.200"/><path d="M19.400 15a1.700 1.700 0 0 0 .3 1.800l.1.100a2 2 0 1 1-2.900 2.900l-.1-.1a1.700 1.700 0 0 0-2.800 1.200V21a2 2 0 1 1-4 0v-.1a1.700 1.700 0 0 0-2.800-1.200l-.1.100a2 2 0 1 1-2.900-2.900l.1-.1A1.700 1.700 0 0 0 3 14H3a2 2 0 1 1 0-4h.1a1.700 1.700 0 0 0 1.200-2.800l-.1-.1a2 2 0 1 1 2.900-2.900l.1.100A1.700 1.700 0 0 0 10 3V3a2 2 0 1 1 4 0v.1a1.700 1.700 0 0 0 2.800 1.200l.1-.1a2 2 0 1 1 2.900 2.900l-.1.100A1.700 1.700 0 0 0 21 10h.1a2 2 0 1 1 0 4H21a1.700 1.700 0 0 0-1.600 1z"/></svg>
            <svg class="w-[18px] h-[18px] ml-[18px]" viewBox="0 0 18 18"><rect x=".7" y=".7" width="16.600" height="16.600" rx="2" fill="#fff" stroke="#777" stroke-width="1.200"/><rect x="10.500" y="2.500" width="5" height="13" fill="#8a8a8a"/></svg>
            <svg class="w-[14px] h-[14px] ml-[21px]" viewBox="0 0 14 14" stroke="#777" stroke-width="1"><path d="m.5.5 13 13M13.500.5l-13 13"/></svg>
          </div>
          <div class="pl-[17px] pt-[8px] text-[14px] text-[#444]">
            <div class="h-[25px] flex items-center"><span class="text-[12px] text-[#666] mr-[6px]">内部ID：</span>1457974771206852664</div>
            <div class="h-[25px] flex items-center"><span class="text-[12px] text-[#666] mr-[6px]">昵称：</span>test901234.</div>
            <div class="h-[25px] flex items-center"><span class="text-[12px] text-[#666] mr-[6px]">显示名：</span>test901234</div>
            <div class="h-[25px] flex items-center"><span class="text-[12px] text-[#666] mr-[6px]">手机号：</span>+8617799205049</div>
            <div class="h-[25px] flex items-center"><span class="text-[12px] text-[#666] mr-[6px]">来源账号：</span>1457974771206852664</div>
            <div class="h-[25px] flex items-center"><span class="text-[12px] text-[#666] mr-[6px]">源文件：</span><a class="text-[#6d55f6]">phone.E01/分区3/data/com.discord/shared_prefs/CacheStore.xml</a></div>
            <div class="h-[25px] flex items-center"><span class="text-[12px] text-[#666] mr-[6px]">已删除：</span>否</div>
          </div>
        </section>
      </main>
    </div>
  </div>
</div>
</body>
</html>
